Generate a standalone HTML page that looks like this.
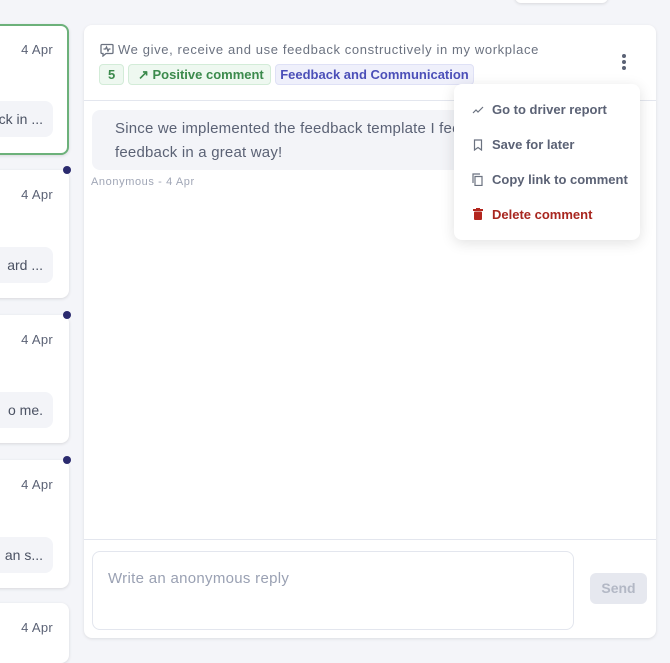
<!DOCTYPE html>
<html><head><style>
*{box-sizing:border-box;margin:0;padding:0}
body{width:670px;height:644px;background:#f4f5f9;font-family:"Liberation Sans",sans-serif;position:relative;overflow:hidden;color:#5b6275}
.card{position:absolute;left:-20px;width:89px;background:#fff;border-radius:8px;box-shadow:0 1px 3px rgba(0,0,0,.12)}
.card .d{position:absolute;right:16px;top:17px;font-size:13px;color:#5b6275;letter-spacing:.3px}
.card .s{position:absolute;right:16px;top:77px;width:80px;height:36px;background:#f3f4f8;border-radius:8px;font-size:14px;line-height:36px;text-align:right;padding-right:10px;color:#4b5263;white-space:nowrap;overflow:hidden}
.dot{position:absolute;left:63px;width:8px;height:8px;border-radius:50%;background:#2a2a6e}
.panel{position:absolute;left:84px;top:25px;width:572px;height:613px;background:#fff;border-radius:8px;box-shadow:0 1px 3px rgba(0,0,0,.1)}
.chip{position:absolute;top:39px;height:21px;border-radius:4px;font-size:13px;font-weight:bold;line-height:20px;padding:0 8px;white-space:nowrap}
.menu{position:absolute;left:454px;top:84px;width:186px;height:156px;background:#fff;border-radius:8px;box-shadow:0 3px 14px rgba(0,0,0,.12)}
.mi{position:absolute;left:38px;font-size:13px;font-weight:bold;color:#5b6275}
.ic{position:absolute;left:18px}
</style></head><body>
<div style="position:absolute;left:515px;top:-10px;width:93px;height:13px;background:#fff;border-radius:6px;box-shadow:0 1px 3px rgba(0,0,0,.12)"></div>
<div class="card" style="top:24px;height:131px;border:2px solid #6cb17a"><div class="d" style="right:14px;top:16px">4 Apr</div><div class="s" style="right:14px;top:75px">ck in ...</div></div>
<div class="card" style="top:170px;height:128px"><div class="d">4 Apr</div><div class="s">ard ...</div></div>
<div class="card" style="top:315px;height:128px"><div class="d">4 Apr</div><div class="s">o me.</div></div>
<div class="card" style="top:460px;height:128px"><div class="d">4 Apr</div><div class="s">an s...</div></div>
<div class="card" style="top:603px;height:60px"><div class="d">4 Apr</div></div>
<div class="dot" style="top:166px"></div><div class="dot" style="top:311px"></div><div class="dot" style="top:456px"></div>
<div class="panel">
<svg style="position:absolute;left:16px;top:18px" width="14" height="14" viewBox="0 0 14 14" fill="none" stroke="#6b7280" stroke-width="1.3"><path d="M2 1.5h10a1 1 0 0 1 1 1v7a1 1 0 0 1-1 1H6l-3 2.5v-2.5H2a1 1 0 0 1-1-1v-7a1 1 0 0 1 1-1z"/><path d="M3.5 6h2l1-2 1.5 4 1-2h1.5"/></svg>
<div style="position:absolute;left:34px;top:17px;font-size:13px;color:#6b7280;letter-spacing:.62px">We give, receive and use feedback constructively in my workplace</div>
<div class="chip" style="left:15px;background:#eef8f0;border:1px solid #d3ecd8;color:#3b8a4c">5</div>
<div class="chip" style="left:44px;width:143px;background:#eef8f0;border:1px solid #d3ecd8;color:#3b8a4c;padding-left:9px">↗ Positive comment</div>
<div class="chip" style="left:191px;width:199px;background:#eff0fb;border:1px solid #dfe1f6;color:#4b4fb8;padding:0;text-align:center">Feedback and Communication</div>
<div style="position:absolute;left:538px;top:29px;width:4px"><div style="width:4px;height:4px;border-radius:50%;background:#5b6275;margin-bottom:2px"></div><div style="width:4px;height:4px;border-radius:50%;background:#5b6275;margin-bottom:2px"></div><div style="width:4px;height:4px;border-radius:50%;background:#5b6275"></div></div>
<div style="position:absolute;left:0;top:75px;width:572px;height:1px;background:#e3e6ee"></div>
<div style="position:absolute;left:8px;top:85px;width:380px;height:60px;background:#f3f4f8;border-radius:8px 0 0 8px;padding:7px 0 0 23px;font-size:15px;line-height:24px;color:#5b6275;white-space:nowrap;overflow:hidden;letter-spacing:.2px">Since we implemented the feedback template I feel<br>feedback in a great way!</div>
<div style="position:absolute;left:7px;top:151px;font-size:11px;color:#a0a6b6;letter-spacing:.6px">Anonymous - 4 Apr</div>
<div style="position:absolute;left:0;top:514px;width:572px;height:1px;background:#e3e6ee"></div>
<div style="position:absolute;left:8px;top:526px;width:482px;height:79px;border:1px solid #e3e6ee;border-radius:8px;padding:18px 15px;font-size:15px;color:#9aa1b3;letter-spacing:.3px">Write an anonymous reply</div>
<div style="position:absolute;left:506px;top:548px;width:57px;height:31px;background:#e6e8ef;border-radius:6px;text-align:center;line-height:31px;font-size:14px;font-weight:bold;color:#b3b8c5">Send</div>
</div>
<div class="menu">
<svg class="ic" style="top:21px" width="12" height="10" viewBox="0 0 12 10" fill="none" stroke="#6b7280" stroke-width="1.2"><path d="M1 8l3-3 2 2 5-5"/></svg><div class="mi" style="top:18px">Go to driver report</div>
<svg class="ic" style="top:55px;left:19px" width="10" height="12" viewBox="0 0 10 12" fill="none" stroke="#6b7280" stroke-width="1.2"><path d="M1.5 1h7v10L5 8.5 1.5 11z"/></svg><div class="mi" style="top:53px">Save for later</div>
<svg class="ic" style="top:89px" width="12" height="13" viewBox="0 0 12 13" fill="none" stroke="#6b7280" stroke-width="1.2"><path d="M3 3.5h7v9H3z"/><path d="M1 10V1h7"/></svg><div class="mi" style="top:88px">Copy link to comment</div>
<svg class="ic" style="top:124px;left:19px" width="10" height="12" viewBox="0 0 10 12"><rect x="0" y="1" width="10" height="2" fill="#b3261e"/><rect x="3" y="0" width="4" height="2" fill="#b3261e"/><rect x="1" y="3.5" width="8" height="8.5" rx="1" fill="#b3261e"/></svg><div class="mi" style="top:123px;color:#a8261f">Delete comment</div>
</div>
</body></html>
